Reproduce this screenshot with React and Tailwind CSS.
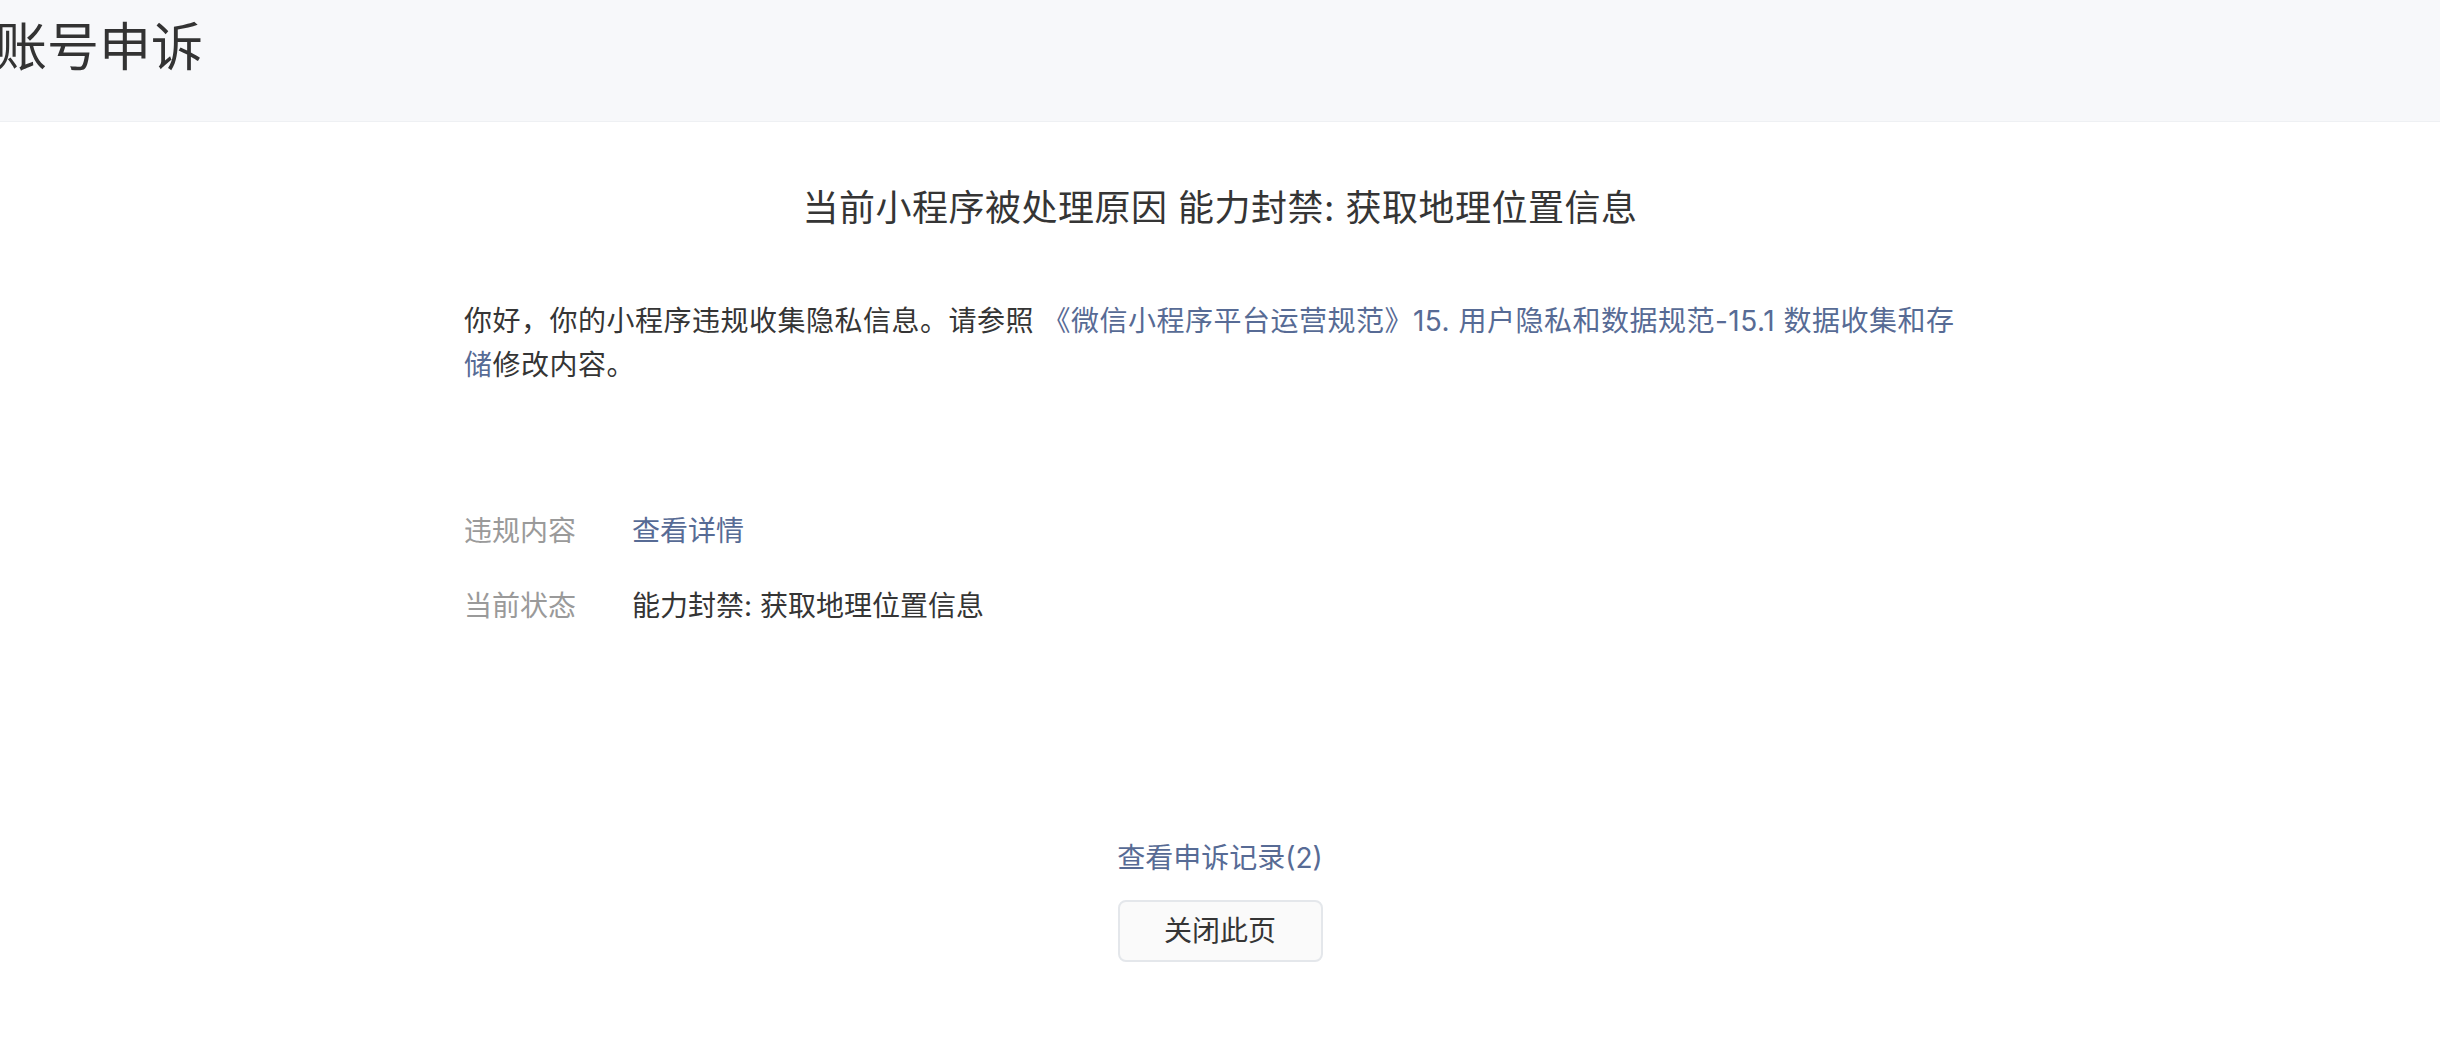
import React from "react";

const font = { fontFamily: 'Inter, "Noto Sans CJK SC", sans-serif' };

const InfoRow = ({ label, children }) => (
	<div className="flex items-start text-[28px] leading-[44px]">
		<div className="w-[168px] shrink-0 text-[#9a9a9a]">{label}</div>
		<div className="flex-1">{children}</div>
	</div>
);

export default function App() {
	return (
		<div
			className="min-h-screen w-full bg-white text-[#353535] overflow-hidden"
			style={font}
		>
			{/* header */}
			<div className="h-[122px] bg-[#f7f8fa] border-b border-[#eef0f3] pt-[22px]">
				<h1 className="-ml-[5px] text-[52px] leading-[52px] font-normal text-[#333333]">
					账号申诉
				</h1>
			</div>

			{/* main */}
			<div className="w-[1512px] mx-auto pt-[68px]">
				<h2 className="text-center text-[36px] leading-[36px] tracking-[0.5px] font-normal text-[#353535]">
					当前小程序被处理原因 能力封禁: 获取地理位置信息
				</h2>

				<p className="mt-[73px] pr-[16px] text-[28px] leading-[44px] tracking-[0.5px]">
					你好，你的小程序违规收集隐私信息。请参照{" "}
					<a href="#" className="text-[#576b95]">
						《微信小程序平台运营规范》15. 用户隐私和数据规范-15.1 数据收集和存储
					</a>
					修改内容。
				</p>

				<div className="mt-[122px] flex flex-col gap-[31px]">
					<InfoRow label="违规内容">
						<a href="#" className="text-[#576b95]">
							查看详情
						</a>
					</InfoRow>
					<InfoRow label="当前状态">能力封禁: 获取地理位置信息</InfoRow>
				</div>

				<div className="mt-[208px] flex flex-col items-center">
					<a href="#" className="text-[28px] leading-[44px] text-[#576b95]">
						查看申诉记录(2)
					</a>
					<button className="mt-[20px] w-[205px] h-[62px] rounded-[8px] border-2 border-[#e4e7eb] bg-[#fafafa] text-[28px] text-[#353535]">
						关闭此页
					</button>
				</div>
			</div>
		</div>
	);
}
